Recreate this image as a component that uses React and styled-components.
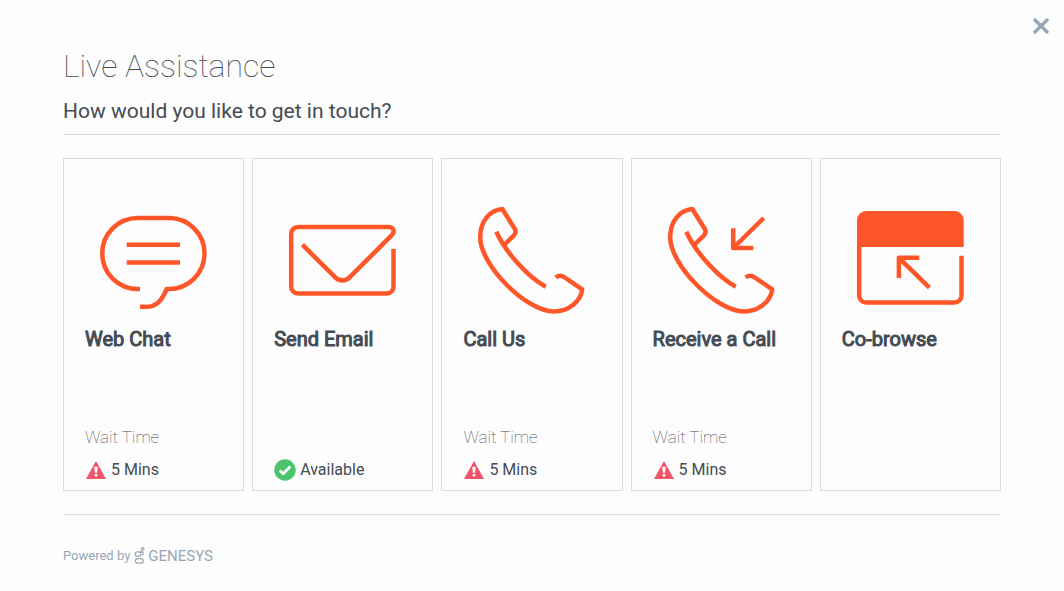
import React from 'react';
import styled, { createGlobalStyle } from 'styled-components';

const GlobalStyle = createGlobalStyle`
  * { box-sizing: border-box; }
  body {
    margin: 0;
    background: #fdfdfd;
    color: #434b54;
    font-family: Roboto, "Liberation Sans", sans-serif;
  }
`;

const Panel = styled.main`
  position: relative;
  padding: 47px 63px 24px;
`;

const CloseButton = styled.button`
  position: absolute;
  top: 14px;
  right: 11px;
  width: 24px;
  height: 24px;
  padding: 4px;
  border: 0;
  background: none;
  color: #98a7b8;
  cursor: pointer;

  svg { display: block; }
`;

const Title = styled.h1`
  margin: 0;
  font-size: 32px;
  line-height: 38px;
  font-weight: 100;
`;

const Subtitle = styled.h2`
  margin: 13px 0 0;
  padding-bottom: 9px;
  border-bottom: 1px solid #d6dee5;
  font-size: 21px;
  line-height: 27px;
  font-weight: 400;
`;

const Channels = styled.div`
  display: grid;
  grid-template-columns: repeat(5, 1fr);
  gap: 8px;
  margin: 23px 0;
`;

const Card = styled.button`
  display: flex;
  flex-direction: column;
  min-height: 333px;
  padding: 48px 21px 8px;
  border: 1px solid #d6dee5;
  background: #fdfdfd;
  color: inherit;
  font-family: inherit;
  text-align: left;
  cursor: pointer;
`;

const IconFrame = styled.span`
  align-self: center;
  height: 108px;
  color: #ff5629;

  svg { display: block; overflow: visible; }
`;

const CardTitle = styled.span`
  margin-top: 12px;
  font-size: 20px;
  line-height: 24px;
  font-weight: 400;
  white-space: nowrap;
  -webkit-text-stroke: 1px currentColor;
`;

const Wait = styled.span`
  display: flex;
  flex-direction: column;
  gap: 10px;
  margin-top: auto;
`;

const WaitLabel = styled.span`
  font-size: 17px;
  line-height: 22px;
  font-weight: 100;
`;

const Status = styled.span`
  display: flex;
  align-items: center;
  gap: 4px;
  font-size: 16px;
  line-height: 24px;

  svg { flex: none; }
`;

const Footer = styled.footer`
  display: flex;
  align-items: center;
  gap: 4px;
  padding-top: 29px;
  border-top: 1px solid #d6dee5;
  color: #98a7b8;
  font-size: 13px;
  line-height: 24px;
`;

const Brand = styled.span`
  display: inline-flex;
  align-items: center;
  gap: 3px;
  font-size: 15px;
`;

const LineIcon = ({ children }) => (
  <svg width="107" height="107" viewBox="0 0 107 107" fill="none" stroke="currentColor" strokeWidth="4.5" aria-hidden="true">
    {children}
  </svg>
);

const ChatIcon = () => (
  <LineIcon>
    <path d="M40 82H37.7A35.5 35.5 0 0 1 37.7 11H69A35.5 35.5 0 0 1 69 82H66.7C62 93 57 99.8 46 99.8H40" strokeLinejoin="round" />
    <path d="M26.7 37.7H80M26.7 55.5H80" />
  </LineIcon>
);

const MailIcon = () => (
  <LineIcon>
    <path d="M13.4 37.7L46 70.2Q53.4 76.6 60.8 70.2L102.8 28.2C106.6 24.4 104 19.9 99.6 19.9H9A6.8 6.8 0 0 0 2.2 26.7V79.7A6.8 6.8 0 0 0 9 86.5H97.7A6.8 6.8 0 0 0 104.5 79.7V42" />
  </LineIcon>
);

const Handset = () => (
  <>
    <path d="M18.3 24.7C28 46 50 70 67.7 79.7" />
    <path d="M26 38L36 28.3Q38.6 25.5 37 22.2L24.3 2C12 3 2.2 14 2.2 30.3C2.2 58 48 104.5 76 104.5C91 104.5 103 94 104.2 82.3L86 70Q82 67.2 77.7 70.5" strokeLinejoin="round" />
  </>
);

const PhoneIcon = () => (
  <LineIcon><Handset /></LineIcon>
);

const IncomingCallIcon = () => (
  <LineIcon>
    <Handset />
    <path d="M65.2 21.3V41H85.3M65.2 41L95.7 11" strokeLinejoin="round" />
  </LineIcon>
);

const BrowserIcon = () => (
  <LineIcon>
    <path d="M0 40V13A9 9 0 0 1 9 4H97.7A9 9 0 0 1 106.7 13V40Z" fill="currentColor" stroke="none" />
    <path d="M2.2 38V88.7A6.8 6.8 0 0 0 9 95.5H97.7A6.8 6.8 0 0 0 104.5 88.7V48.7" />
    <path d="M41.9 71V50.8H62.3M41.9 50.8L72.4 80.7" strokeLinejoin="round" />
  </LineIcon>
);

const WarningIcon = () => (
  <svg width="22" height="22" viewBox="0 0 22 22" aria-hidden="true">
    <path d="M11 2L21 20H1Z" fill="#ef5468" />
    <path d="M9.3 7.8H12.7L12.2 13.8H9.8ZM9.7 15H12.3V17.6H9.7Z" fill="#fdfdfd" />
  </svg>
);

const CheckIcon = () => (
  <svg width="22" height="22" viewBox="0 0 22 22" aria-hidden="true">
    <circle cx="11" cy="11" r="10.7" fill="#4bc46a" />
    <path d="M5.8 11.4L9.2 14.8L16.2 7.6" fill="none" stroke="#fdfdfd" strokeWidth="2.8" />
  </svg>
);

const GenesysMark = () => (
  <svg width="11" height="18" viewBox="0 0 11 18" fill="none" stroke="currentColor" strokeWidth="1.2" aria-hidden="true">
    <circle cx="8.6" cy="2" r="1.4" />
    <path d="M9 4.8H3.4A2.3 2.3 0 0 0 3.4 9.4H4.6A2.3 2.3 0 0 0 4.6 4.8M9 4.8V8.6" />
    <rect x="1.4" y="11.6" width="7.8" height="4.6" rx="2.3" />
  </svg>
);

const channels = [
  { title: 'Web Chat', Icon: ChatIcon, wait: '5 Mins' },
  { title: 'Send Email', Icon: MailIcon, available: true },
  { title: 'Call Us', Icon: PhoneIcon, wait: '5 Mins' },
  { title: 'Receive a Call', Icon: IncomingCallIcon, wait: '5 Mins' },
  { title: 'Co-browse', Icon: BrowserIcon },
];

export default function App() {
  return (
    <Panel>
      <GlobalStyle />
      <CloseButton type="button" aria-label="Close">
        <svg width="16" height="16" viewBox="0 0 16 16" stroke="currentColor" strokeWidth="3.4" aria-hidden="true">
          <path d="M1 1L15 15M15 1L1 15" />
        </svg>
      </CloseButton>
      <Title>Live Assistance</Title>
      <Subtitle>How would you like to get in touch?</Subtitle>
      <Channels>
        {channels.map(({ title, Icon, wait, available }) => (
          <Card key={title} type="button">
            <IconFrame><Icon /></IconFrame>
            <CardTitle>{title}</CardTitle>
            <Wait>
              {wait && <WaitLabel>Wait Time</WaitLabel>}
              {wait && <Status><WarningIcon />{wait}</Status>}
              {available && <Status><CheckIcon />Available</Status>}
            </Wait>
          </Card>
        ))}
      </Channels>
      <Footer>
        Powered by
        <Brand><GenesysMark />GENESYS</Brand>
      </Footer>
    </Panel>
  );
}
